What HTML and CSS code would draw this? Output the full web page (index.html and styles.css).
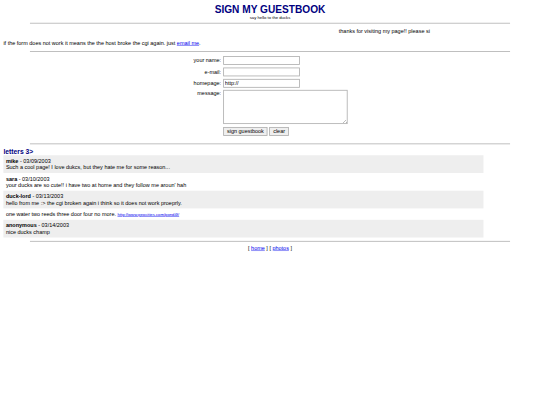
FILE: index.html
```html
<!DOCTYPE html>
<html lang="en">
<head>
<meta charset="utf-8">
<title>Sign my guestbook</title>
<link rel="stylesheet" href="styles.css">
</head>
<body>
<div class="view">
<div class="page">
  <header class="head">
    <h1>SIGN MY GUESTBOOK</h1>
    <div class="sub">say hello to the ducks</div>
  </header>
  <hr>
  <div class="ticker"><span>thanks for visiting my page!! please si</span></div>
  <p class="note">if the form does not work it means the the host broke the cgi again. just <a href="#">email me</a>.</p>
  <hr>
  <form class="form">
    <label for="n">your name:</label><input id="n" type="text">
    <label for="e">e-mail:</label><input id="e" type="text">
    <label for="h">homepage:</label><input id="h" type="text" value="http://">
    <label class="top" for="m">message:</label><textarea id="m"></textarea>
    <div class="buttons"><button type="button">sign guestbook</button><button type="button">clear</button></div>
  </form>
  <hr>
  <h2>letters 3&gt;</h2>
  <div class="letters">
    <div class="entry"><b>mike</b> - 03/09/2003<br>Such a cool page! I love dukcs, but they hate me for some reason...</div>
    <div class="entry"><b>sara</b> - 03/10/2003<br>your ducks are so cute!! i have two at home and they follow me aroun' hah</div>
    <div class="entry"><b>duck-lord</b> - 03/13/2003<br>hello from me :&gt; the cgi broken again i think so it does not work proeprly.</div>
    <div class="entry plain">one water two reeds three door four no more. <a class="tiny" href="#">http://www.geocities.com/pond4f/</a></div>
    <div class="entry"><b>anonymous</b> - 03/14/2003<br>nice ducks champ</div>
  </div>
  <hr>
  <footer>[ <a href="#">home</a> ] [ <a href="#">photos</a> ]</footer>
</div>
</div>
</body>
</html>
```
FILE: styles.css
```css
html, body {
  margin: 0;
  height: 100%;
  background: #fff;
}
.view {
  width: 540px;
  height: 405px;
  overflow: hidden;
}
/* The page is laid out at 1280px wide and shown reduced. */
.page {
  transform: scale(0.421875);
  transform-origin: 0 0;
  box-sizing: border-box;
  width: 1280px;
  padding: 8px;
  font: 13px/15px "Liberation Sans", Arial, sans-serif;
  color: #000;
}
a { color: #0000ee; }
hr {
  box-sizing: border-box;
  width: 90%;
  height: 2px;
  margin: 0 auto;
  border: 0;
  background: #b4b4b4;
}
.head { height: 46px; text-align: center; }
h1 { margin: 0; font-size: 24px; line-height: 27px; color: #000080; }
.sub { font-size: 10px; line-height: 12px; }
.ticker { margin-top: 10px; height: 15px; padding-left: 795px; white-space: nowrap; }
.note { margin: 13px 0 12px; }
.form {
  display: grid;
  grid-template-columns: 516px 295px;
  grid-template-rows: 21px 21px 21px 81px 21px;
  row-gap: 6px;
  column-gap: 5px;
  margin: 10px 0 18px;
}
label { text-align: right; align-self: center; }
.top { align-self: start; }
input, textarea {
  box-sizing: border-box;
  margin: 0;
  border: 2px solid #b0b0b0;
  font: 13px "Liberation Sans", Arial, sans-serif;
}
input { width: 182px; height: 21px; padding: 1px 2px; }
textarea { width: 295px; height: 81px; margin-top: -1px; }
.buttons { grid-column: 2; display: flex; gap: 4px; }
button {
  box-sizing: border-box;
  height: 21px;
  padding: 1px 7px;
  border: 2px solid #b0b0b0;
  border-radius: 0;
  background: #efefef;
  font: 13px "Liberation Sans", Arial, sans-serif;
}
h2 { margin: 7px 0 0; font-size: 16px; line-height: 19px; color: #000080; }
.letters { width: 90%; margin-bottom: 8px; }
.entry { padding: 6px; }
.entry:nth-child(odd) { background: #eee; }
.entry.plain { height: 15px; }
.tiny { font-size: 10px; }
footer { margin-top: 8px; text-align: center; }
```
